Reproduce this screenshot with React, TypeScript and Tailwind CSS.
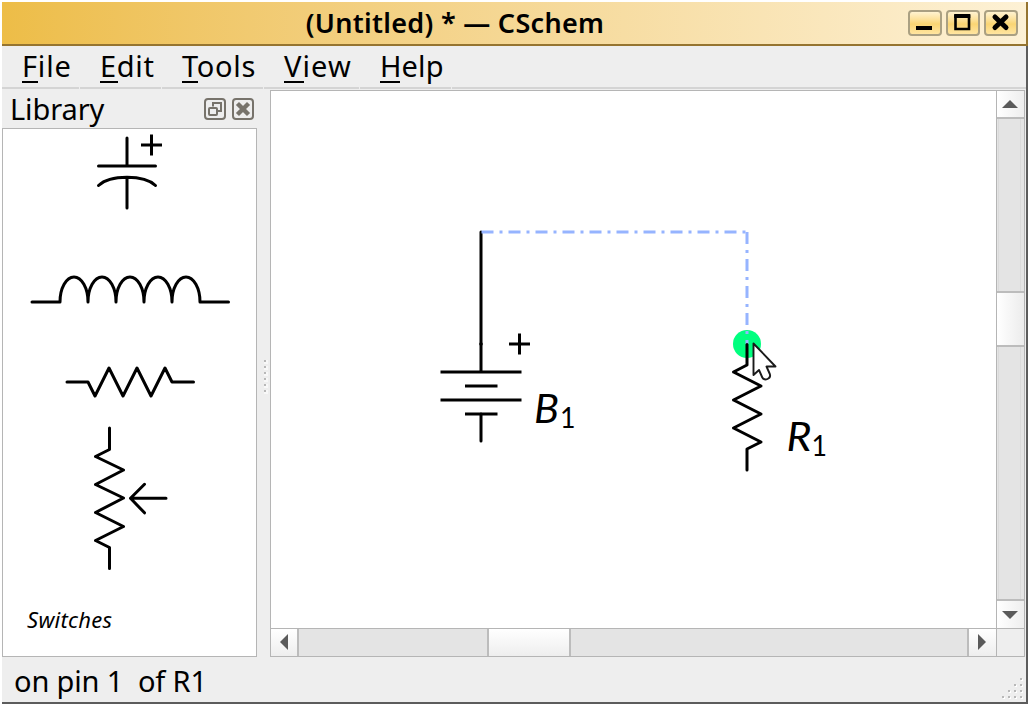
import type { ReactNode } from "react";

type MenuItem = { label: string; width: string; tracking: string; bar: string };

const menus: MenuItem[] = [
  { label: "File", width: "w-[78px]", tracking: "tracking-[0.8px]", bar: "w-4" },
  { label: "Edit", width: "w-[82px]", tracking: "tracking-[0.7px]", bar: "w-[18px]" },
  { label: "Tools", width: "w-[102px]", tracking: "tracking-[0.7px]", bar: "w-4" },
  { label: "View", width: "w-24", tracking: "tracking-[1.1px]", bar: "w-5" },
  { label: "Help", width: "w-[92px]", tracking: "tracking-[0.1px]", bar: "w-5" },
];

function TitleButton({ children }: { children: ReactNode }) {
  return (
    <button className="flex h-[26px] w-[34px] items-center justify-center rounded-[4px] border-2 border-[#aaa082] bg-linear-to-b from-[#fff3d0] via-[#fad573] via-55% to-[#ffe5a0]">
      <svg width="30" height="22" viewBox="0 0 30 22" fill="none" stroke="#000">
        {children}
      </svg>
    </button>
  );
}

function TitleBar() {
  return (
    <header className="flex h-11 shrink-0 items-center justify-between border-r-2 border-b-2 border-[#957430] bg-linear-to-r from-[#edbd47] to-[#fdf1d5] pr-2">
      <h1 className="w-[911px] text-center text-[27px] leading-[42px] font-semibold tracking-[0.3px] whitespace-pre">
        (Untitled) * — CSchem
      </h1>
      <div className="flex shrink-0 gap-1">
        <TitleButton>
          <path d="M6 16H22" strokeWidth="4" />
        </TitleButton>
        <TitleButton>
          <path d="M7.500 4H21V17H7.500Z" strokeWidth="2.600" />
          <path d="M6.200 4H22.300" strokeWidth="4" />
        </TitleButton>
        <TitleButton>
          <path d="M9 5L20 15.500M20 5L9 15.500" strokeWidth="5" strokeLinecap="round" />
        </TitleButton>
      </div>
    </header>
  );
}

function MenuBar() {
  return (
    <nav className="flex h-[43px] shrink-0">
      {menus.map((m) => (
        <div key={m.label} className={`${m.width} ${m.tracking} flex flex-col`}>
          <div className="h-[41px] pl-5 text-[29px] leading-[40px]">
            <span className="relative whitespace-pre">
              {m.label}
              <i className={`${m.bar} absolute top-[35px] left-0 h-[2px] bg-black`} />
            </span>
          </div>
          <i className="mr-px h-[2px] bg-[#d4d4d4]" />
        </div>
      ))}
      <div className="flex-1 border-b-2 border-[#d4d4d4]" />
    </nav>
  );
}

function LibrarySymbols() {
  return (
    <svg className="block" width="253" height="527" viewBox="3 129 253 527" fill="none" stroke="#000" strokeWidth="3" strokeLinecap="round" strokeLinejoin="round">
      <path d="M127 138V166M98.500 166H155.500M98.500 185.500C110 174.500 144 174.500 155.500 185.500M127 178V208" />
      <path d="M141 145H162M151.500 134.500V155.500" strokeLinecap="butt" />
      <path d="M32 302H60A14 25 0 0 1 88 302A14 25 0 0 1 116 302A14 25 0 0 1 144 302A14 25 0 0 1 172 302A14 25 0 0 1 200 302H228.500" />
      <path d="M67 382H88L95 396L109 368L123 396L137 368L151 396L165 368L172 382H193.500" />
      <path d="M109.500 428V449.500L95.500 456.500L123.500 470L95.500 484.500L123.500 498L95.500 512.500L123.500 526.500L95.500 540.500L109.500 547.500V568.500" />
      <path d="M166 498.300H130.500M144.500 484.300L130.500 498.300L144.500 512.800" />
      <text x="27" y="627.500" fontSize="22" fontStyle="italic" fill="#000" stroke="none" textLength="85">Switches</text>
    </svg>
  );
}

function Library() {
  return (
    <aside className="flex w-[255px] shrink-0 flex-col">
      <div className="flex h-[39px] shrink-0 items-center pr-[3px] pl-2">
        <h2 className="flex-1 text-[29px] leading-[39px] tracking-[-0.1px]">Library</h2>
        <svg width="50" height="22" viewBox="0 0 50 22" fill="none" stroke="#77736b" strokeWidth="2">
          <rect x="1" y="1" width="20" height="20" rx="3" />
          <rect x="5" y="10" width="8" height="7" rx="1" />
          <path d="M9 8.500V5H17V13H14" />
          <rect x="29" y="1" width="20" height="20" rx="3" />
          <path d="M35 7L43 15M43 7L35 15" strokeWidth="4.400" strokeLinecap="square" />
        </svg>
      </div>
      <div className="h-[529px] border border-[#b5b5b5] bg-white">
        <LibrarySymbols />
      </div>
    </aside>
  );
}

function Splitter() {
  return (
    <div className="flex w-[13px] shrink-0 flex-col items-center justify-center gap-1 pt-[6px] pl-[2px]">
      {[0, 1, 2, 3, 4, 5].map((i) => (
        <i key={i} className="size-[2px] bg-[#b8b8b8] shadow-[1px_1px_0_1px_#f8f8f8]" />
      ))}
    </div>
  );
}

function Schematic() {
  return (
    <svg className="block h-[537px] w-[725px] bg-white" viewBox="271 91 725 537" fill="none" stroke="#000" strokeWidth="3" strokeLinecap="round" strokeLinejoin="round">
      <circle cx="747" cy="344" r="14" fill="#00ff7f" stroke="none" />
      <path d="M481 232V371M481 414V441" />
      <path d="M440.500 372H521.500M465 386H497.500M440.500 400H521.500M465 414H497.500M509 344H530M519.500 333.500V354.500" strokeLinecap="butt" />
      <circle cx="481" cy="344" r="1.800" fill="#000" stroke="none" />
      <g stroke="#96b4ff" strokeLinecap="butt" strokeDasharray="12 6 3 6">
        <path d="M481.500 232H747" />
        <path d="M747 232V344" />
      </g>
      <path d="M747 344.500V365L733.500 372L761 386L733.500 400L761 414L733.500 428L761 442L747 449V470" />
      <g fill="#000" stroke="none" fontFamily="Lato, sans-serif">
        <text x="534" y="423" fontSize="41" fontStyle="italic" textLength="25" lengthAdjust="spacingAndGlyphs">B</text>
        <text x="560" y="428" fontSize="28" textLength="15.500" lengthAdjust="spacingAndGlyphs">1</text>
        <text x="786.500" y="451" fontSize="41" fontStyle="italic" textLength="25" lengthAdjust="spacingAndGlyphs">R</text>
        <text x="811.500" y="456" fontSize="28" textLength="15.500" lengthAdjust="spacingAndGlyphs">1</text>
      </g>
      <path d="M753.500 343.500V375L759 370L762.300 377.500Q764 380.500 767.500 379Q771 377.500 769.800 374L766.500 366.500H775.500Z" fill="#fff" strokeWidth="1.900" stroke="#1a1a1a" />
    </svg>
  );
}

function VerticalScroll() {
  return (
    <div className="flex h-[537px] w-7 flex-col border-l border-[#b5b5b5]">
      <button className="flex h-[26px] items-center justify-center bg-linear-to-r from-white to-[#eeeeee] pr-[2px]">
        <svg width="16" height="8"><path d="M0 8L8 0L16 8Z" fill="#5a5a5a" /></svg>
      </button>
      <div className="h-[176px] border-y-2 border-[#bcbcbc] bg-[#e4e4e4] pr-[3px] pl-px"><div className="h-full border-x border-[#dadada]" /></div>
      <div className="h-[52px] bg-linear-to-r from-white to-[#ececec]" />
      <div className="h-[256px] border-y-2 border-[#bcbcbc] bg-[#e4e4e4] pr-[3px] pl-px"><div className="h-full border-x border-[#dadada]" /></div>
      <button className="flex h-[27px] items-center justify-center bg-linear-to-r from-white to-[#eeeeee] pr-[2px]">
        <svg width="16" height="8"><path d="M0 0L8 8L16 0Z" fill="#5a5a5a" /></svg>
      </button>
    </div>
  );
}

function HorizontalScroll() {
  return (
    <div className="flex h-7 border-t border-[#b5b5b5]">
      <button className="flex w-[26px] items-center justify-center bg-linear-to-b from-white to-[#eeeeee] pb-[2px]">
        <svg width="8" height="16"><path d="M8 0L0 8L8 16Z" fill="#5a5a5a" /></svg>
      </button>
      <div className="w-[192px] border-x-2 border-[#bcbcbc] bg-[#e4e4e4]" />
      <div className="w-20 bg-linear-to-b from-white to-[#eeeeee]" />
      <div className="w-[400px] border-x-2 border-[#bcbcbc] bg-[#e4e4e4]" />
      <button className="flex w-[27px] items-center justify-center bg-linear-to-b from-white to-[#eeeeee] pr-[2px] pb-[2px]">
        <svg width="8" height="16"><path d="M0 0L8 8L0 16Z" fill="#5a5a5a" /></svg>
      </button>
      <div className="flex-1 border-l border-[#b5b5b5]" />
    </div>
  );
}

function StatusBar() {
  return (
    <footer className="flex h-[45px] shrink-0 items-end justify-between pl-3">
      <p className="h-[45px] text-[29px] leading-[47px] tracking-[-0.15px] whitespace-pre">on pin 1  of R1</p>
      <svg className="mr-[3px] mb-[3px]" width="21" height="21" fill="#b8b8b8">
        {[[18, 0], [12, 6], [18, 6], [6, 12], [12, 12], [18, 12], [0, 18], [6, 18], [12, 18], [18, 18]].map(([x, y]) => (
          <g key={`${x}-${y}`}>
            <rect x={x + 1} y={y + 1} width="2" height="2" fill="#fff" />
            <rect x={x} y={y} width="2" height="2" />
          </g>
        ))}
      </svg>
    </footer>
  );
}

export default function App() {
  return (
    <div className="h-[704px] w-[1028px] overflow-hidden bg-white pt-[2px] pl-[2px] font-['Noto_Sans',sans-serif] text-black">
      <div className="flex h-[702px] flex-col bg-[#eeeeee]">
        <TitleBar />
        <div className="flex h-[658px] flex-col border-r-2 border-b-2 border-[#5c5c5c]">
          <MenuBar />
          <div className="flex h-[568px] shrink-0">
            <Library />
            <Splitter />
            <main className="mt-[1px] h-[567px] w-[755px] border border-[#b5b5b5]">
              <div className="flex">
                <Schematic />
                <VerticalScroll />
              </div>
              <HorizontalScroll />
            </main>
          </div>
          <StatusBar />
        </div>
      </div>
    </div>
  );
}
